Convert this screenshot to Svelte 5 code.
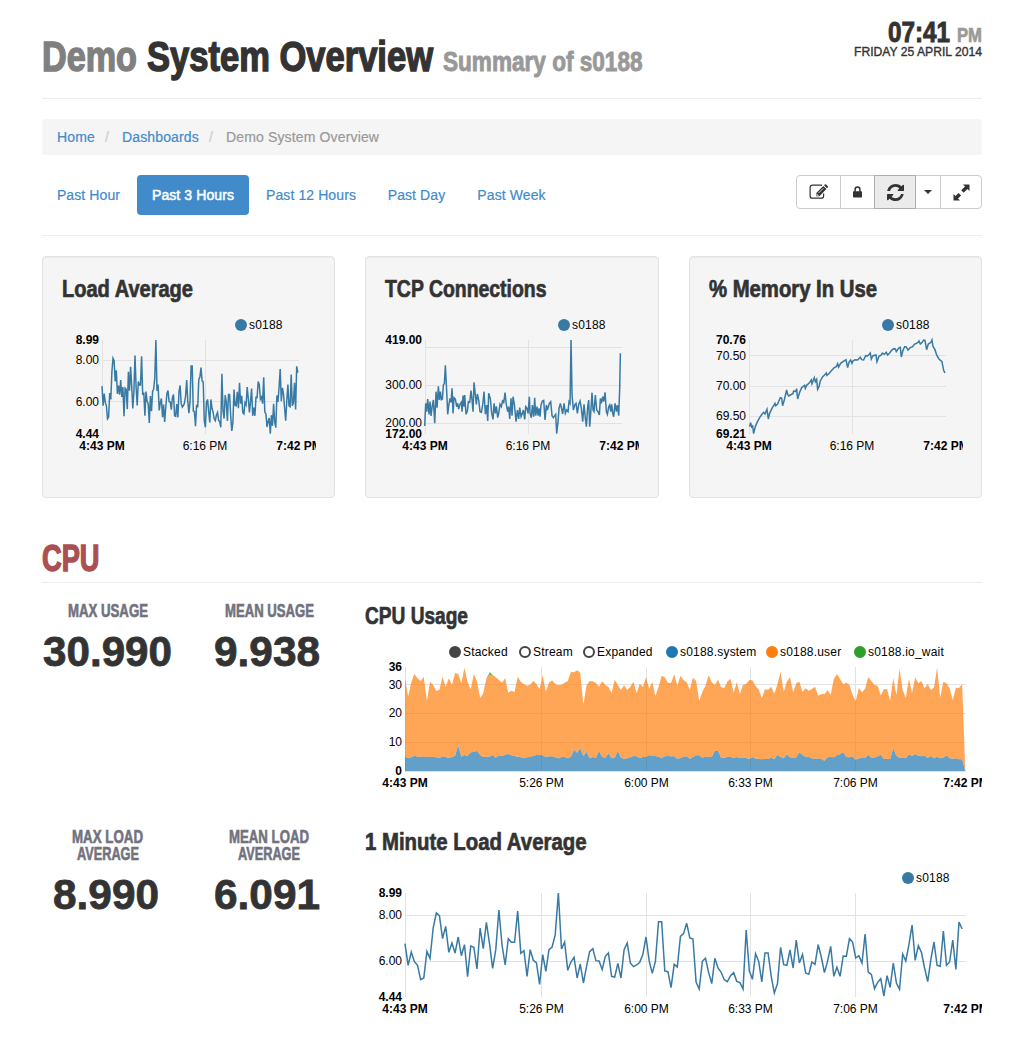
<script>
  const ranges = [
    { label: 'Past Hour', size: 'hour' },
    { label: 'Past 3 Hours', size: 'three', active: true },
    { label: 'Past 12 Hours', size: 'twelve' },
    { label: 'Past Day', size: 'day' },
    { label: 'Past Week', size: 'week' }
  ];

  // One-minute load samples, as depth below the peak (0 = 8.99, 310 = 4.44).
  const load = [
    152,217,177,206,217,260,255,175,196,105,60,68,137,100,178,150,180,132,188,155,251,159,163,228,105,167,88,152,226,170,
    51,156,216,137,148,148,54,181,173,250,170,202,210,274,185,235,170,162,125,0,168,147,232,207,193,255,213,270,220,176,
    167,203,204,230,190,180,250,252,211,255,170,150,210,221,216,208,184,132,203,241,205,86,86,234,236,284,214,222,130,122,
    91,135,138,267,288,205,196,238,272,196,225,238,260,266,248,239,265,269,288,111,233,259,182,205,267,180,180,250,300,272,
    163,215,217,171,225,141,210,184,240,244,207,214,155,192,239,205,160,250,223,250,189,190,137,147,195,188,210,123,237,244,
    287,268,257,309,248,283,210,270,289,183,204,155,96,202,158,178,225,266,200,147,217,220,114,217,207,141,229,87,108
  ];

  // Stacked CPU samples, in thirds of a pixel below the plot's top edge.
  const cpuTotal = [
    250,305,262,237,250,258,246,318,260,270,288,284,245,276,250,270,234,237,265,218,262,283,237,260,309,295,250,240,240,247,
    255,263,250,293,287,291,245,260,268,272,269,257,268,282,241,290,263,256,267,271,269,263,258,231,232,226,234,329,271,258,
    259,264,275,259,270,276,294,254,270,285,271,285,275,260,295,266,276,247,281,261,303,276,242,247,263,264,238,272,242,255,
    262,284,248,258,318,290,272,241,262,270,254,277,279,260,251,293,262,296,269,267,255,256,273,283,310,283,284,275,296,268,
    231,291,260,247,292,265,260,291,280,287,282,275,302,297,298,286,299,252,237,252,268,263,270,300,318,279,292,281,246,258,
    270,272,301,283,282,318,249,300,222,285,308,252,294,247,265,258,280,267,284,278,218,308,260,265,280,316,278,279,267,528
  ];
  const cpuSystem = [
    485,489,487,482,485,486,484,486,486,486,487,489,484,486,489,486,482,451,485,480,482,472,471,467,480,486,485,485,480,488,
    481,483,479,477,481,483,485,487,490,487,486,482,480,479,481,487,484,484,487,490,486,486,489,485,464,473,460,483,470,490,
    486,489,468,486,488,475,490,488,468,488,491,490,487,483,484,489,486,486,480,483,483,485,490,484,483,484,484,491,489,485,
    484,491,486,481,481,489,484,486,486,467,467,488,489,485,486,489,486,489,488,489,492,486,491,491,493,491,492,488,492,479,
    486,490,478,487,489,487,472,480,485,486,490,492,490,492,497,487,485,487,481,478,471,486,487,484,494,490,489,489,479,488,
    488,484,479,492,491,492,460,482,488,488,490,478,483,477,482,484,482,489,483,490,485,490,488,481,490,491,490,493,493,528
  ];

  const tcp = [
    [210,543],[213,475],[216,500],[219,462],[223,508],[226,470],[229,513],[233,480],[236,465],[240,535],[244,440],[247,488],[251,424],[254,465],[257,440],[260,464],[263,462],[266,420],[269,415],[272,361],
    [276,440],[279,508],[282,482],[286,460],[289,472],[292,430],[295,505],[298,458],[302,462],[306,485],[309,475],[312,492],[316,478],[320,472],[322,500],[325,452],[328,485],[330,450],[334,508],[338,498],
    [341,470],[345,472],[349,437],[352,465],[355,500],[358,412],[362,450],[365,478],[368,447],[372,465],[376,500],[380,502],[384,480],[388,440],[392,508],[396,480],[399,528],[402,445],[407,462],[411,505],
    [415,523],[418,475],[422,505],[425,484],[429,518],[432,505],[436,478],[440,485],[444,465],[447,475],[451,443],[455,480],[459,500],[462,485],[465,522],[469,460],[472,512],[475,455],[479,478],[484,530],
    [488,495],[492,522],[495,488],[499,515],[502,508],[506,495],[510,523],[513,485],[517,490],[520,505],[524,455],[526,505],[530,518],[533,480],[537,515],[540,458],[543,512],[547,485],[550,512],[553,490],
    [556,515],[559,480],[563,468],[567,466],[571,525],[575,480],[578,495],[581,485],[584,475],[588,470],[592,512],[596,518],[600,512],[603,508],[606,566],[610,530],[613,490],[617,475],[620,488],[624,507],
    [628,475],[632,505],[636,495],[640,500],[643,470],[646,475],[649,285],[652,450],[656,495],[660,480],[664,475],[668,505],[672,478],[676,468],[680,490],[684,530],[688,478],[692,520],[695,545],[699,485],
    [702,465],[705,545],[709,490],[712,443],[715,495],[718,500],[722,450],[726,495],[730,500],[734,510],[737,460],[740,475],[744,455],[747,470],[751,442],[755,500],[758,508],[762,485],[765,480],[768,500],
    [771,478],[774,505],[777,515],[781,475],[785,500],[788,480],[792,512],[795,430],[797,325]
  ];
  const memory = [
    [208,545],[211,533],[214,546],[217,543],[220,566],[225,545],[230,533],[238,518],[245,508],[250,502],[254,507],[260,493],[264,522],[268,505],[275,490],[284,475],[286,482],[292,477],[296,467],[300,458],
    [304,459],[307,482],[312,465],[319,435],[322,448],[325,453],[330,450],[338,446],[340,438],[346,440],[349,431],[352,462],[358,442],[364,428],[369,424],[373,421],[375,430],[379,421],[386,415],[393,405],
    [395,416],[402,398],[405,410],[409,403],[412,433],[416,425],[420,408],[427,395],[432,391],[438,384],[440,391],[447,385],[455,375],[462,368],[468,365],[472,356],[475,366],[481,355],[488,350],[497,344],
    [502,368],[506,352],[511,345],[515,355],[518,348],[524,344],[532,345],[540,337],[544,344],[550,345],[556,332],[562,333],[570,324],[573,342],[578,332],[587,330],[590,350],[596,334],[603,330],[606,324],
    [612,328],[618,322],[622,330],[628,324],[634,316],[640,311],[645,312],[648,320],[655,309],[660,307],[663,336],[668,316],[673,305],[677,305],[683,315],[690,308],[697,305],[702,298],[708,295],[713,292],
    [716,288],[720,297],[726,292],[730,285],[734,286],[739,314],[744,297],[752,292],[755,285],[758,304],[764,314],[769,330],[776,342],[785,350],[790,376],[794,384]
  ];

  const fmt = (x, y) => `${x.toFixed(2)},${y.toFixed(2)}`;
  const step = 3.13;
  const scaled = (pts, dx) => pts.map(([x, y]) => fmt(x / 3 - dx, y / 3 - 65)).join(' ');
  const stackY = (v) => (v - 216) / 3 + 33;
  const area = (top, bottom) =>
    [...top.map((v, i) => fmt(40 + i * step, stackY(v))),
     ...bottom.map((v, i) => fmt(40 + i * step, stackY(v))).reverse()].join(' ');

  const loadSmall = load.map((v, i) => fmt(40 + i * 1.1, 30 + (v * 94) / 310)).join(' ');
  const loadLarge = load.map((v, i) => fmt(40 + i * step, 33 + v / 3)).join(' ');
  const floor = cpuTotal.map(() => 528);
  const userArea = area(cpuTotal, cpuSystem);
  const systemArea = area(cpuSystem, floor);

  const cards = [
    {
      title: 'Load Average', width: 131, line: loadSmall,
      labels: [['8.99', 34, true], ['8.00', 54], ['6.00', 96], ['4.44', 128, true]],
      grid: [50.5, 91.5]
    },
    {
      title: 'TCP Connections', width: 161.5, line: scaled(tcp, 30.3),
      labels: [['419.00', 34, true], ['300.00', 79], ['200.00', 117], ['172.00', 128, true]],
      grid: [37.5, 75.5, 113.5]
    },
    {
      title: '% Memory In Use', width: 168, line: scaled(memory, 28.7),
      labels: [['70.76', 34, true], ['70.50', 50], ['70.00', 80], ['69.50', 110], ['69.21', 128, true]],
      grid: [45.5, 76.5, 106.5]
    }
  ];

  const ticks = [[176.5, '5:26 PM'], [281.5, '6:00 PM'], [385.5, '6:33 PM'], [490.5, '7:06 PM']];
  const legend = [
    [90, 'Stacked', 'dark'], [160, 'Stream', 'ring'], [224, 'Expanded', 'ring'],
    [307, 's0188.system', 'blue'], [407, 's0188.user', 'orange'], [495, 's0188.io_wait', 'green']
  ];

  const rows = [
    {
      title: 'CPU Usage', width: 103, stacked: true,
      stats: [
        { lines: [['MAX USAGE', 80]], value: '30.990', width: 129 },
        { lines: [['MEAN USAGE', 89]], value: '9.938', width: 106 }
      ],
      labels: [['36', 37, true], ['30', 55], ['20', 83], ['10', 112], ['0', 141, true]],
      grid: [50.5, 79.5, 108.5, 137.5]
    },
    {
      title: '1 Minute Load Average', width: 221.5,
      stats: [
        { lines: [['MAX LOAD', 71], ['AVERAGE', 62]], value: '8.990', width: 106 },
        { lines: [['MEAN LOAD', 80], ['AVERAGE', 62]], value: '6.091', width: 106 }
      ],
      labels: [['8.99', 37, true], ['8.00', 59], ['6.00', 105], ['4.44', 141, true]],
      grid: [55.5, 101.5]
    }
  ];
</script>

{#snippet fitted(text, width, height, baseline, tone)}
  <svg class="fitted {tone}" {width} {height}>
    <text x="0" y={baseline} textLength={width} lengthAdjust="spacingAndGlyphs">{text}</text>
  </svg>
{/snippet}

<main>
  <header>
    <h1>
      {@render fitted('Demo', 95, 60, 48, 'title muted')}
      {@render fitted('System Overview', 286, 60, 48, 'title')}
      {@render fitted('Summary of s0188', 199.5, 60, 48, 'subtitle')}
    </h1>
    <div class="clock">
      <div class="time">
        {@render fitted('07:41', 62, 25, 22, 'digits')}
        {@render fitted('PM', 25, 25, 22, 'meridiem')}
      </div>
      {@render fitted('FRIDAY 25 APRIL 2014', 128, 14, 11, 'date')}
    </div>
  </header>

  <nav class="crumbs">
    <a>Home</a><span class="slash">/</span><a class="second">Dashboards</a><span class="slash">/</span><span class="here">Demo System Overview</span>
  </nav>

  <div class="toolbar">
    <div class="pills">
      {#each ranges as r}
        <a class="pill {r.size}" class:active={r.active}>{r.label}</a>
      {/each}
    </div>
    <div class="buttons">
      <button class="edit" aria-label="Edit">
        <svg width="20" height="16" viewBox="0 0 20 16">
          <path d="M14.6 9.6V11.9a2.3 2.3 0 0 1-2.3 2.3H3.4A2.3 2.3 0 0 1 1.1 11.9V3.4A2.3 2.3 0 0 1 3.4 1.1H12l1 .3" fill="none" stroke="#333" stroke-width="1.2" />
          <path d="M7.3 12.2V9L14.3 2L17.4 5.1L10.4 12.2Z" fill="#333" />
          <path d="M15 1.3l.8-.8q.6-.5 1.2 0l1.8 1.8q.6.6 0 1.2l-.8.8Z" fill="#333" />
          <path d="M9.6 9L14.4 4.2M8.1 9.8v1.6h1.6" stroke="#fff" stroke-width=".8" fill="none" />
        </svg>
      </button>
      <button class="lock" aria-label="Lock">
        <svg width="9" height="12" viewBox="0 0 9 12">
          <path d="M2.1 6V3.4a2.4 2.4 0 0 1 4.8 0V6" fill="none" stroke="#333" stroke-width="1.5" />
          <rect y="5.2" width="9" height="6.2" rx=".7" fill="#333" />
        </svg>
      </button>
      <button class="refresh" aria-label="Refresh">
        <svg width="17" height="17" viewBox="0 0 1536 1536">
          <path fill="#333" d="M1511 928q0 5-1 7-64 268-268 434.5t-478 166.5q-146 0-282.5-55t-243.5-157l-129 129q-19 19-45 19t-45-19-19-45v-448q0-26 19-45t45-19h448q26 0 45 19t19 45-19 45l-137 137q71 66 161 102t187 36q134 0 250-65t186-179q11-17 53-117 8-23 30-23h192q13 0 22.5 9.5t9.5 22.5zm25-800v448q0 26-19 45t-45 19h-448q-26 0-45-19t-19-45 19-45l138-138q-148-137-349-137-134 0-250 65t-186 179q-11 17-53 117-8 23-30 23h-199q-13 0-22.5-9.5t-9.5-22.5v-7q65-268 270-434.5t480-166.5q146 0 284 55.5t245 156.5l130-129q19-19 45-19t45 19 19 45z" />
        </svg>
      </button>
      <button class="more" aria-label="More">
        <svg width="8" height="4" viewBox="0 0 8 4"><path d="M0 0H8L4 4Z" fill="#333" /></svg>
      </button>
      <button class="expand" aria-label="Full screen">
        <svg width="17" height="17" viewBox="0 0 17 17">
          <path fill="#333" d="M10 .5H16Q16.5.5 16.5 1V7L14.5 5L10.7 8.8L8.2 6.3L12 2.5ZM7 16.5H1Q.5 16.5.5 16V10L2.5 12L5.6 8.9L8.1 11.4L5 14.5Z" />
        </svg>
      </button>
    </div>
  </div>

  <section class="cards">
    {#each cards as c}
      <article class="card">
        <h3>{@render fitted(c.title, c.width, 34, 21, 'heading')}</h3>
        <svg class="chart" width="254" height="150">
          <circle class="steel" cx="179" cy="15" r="6" />
          <text class="name" x="187" y="19">s0188</text>
          <path class="grid" d="M40.5 30V124M143.5 30V124" />
          {#each c.grid as y}<path class="grid" d="M40 {y}H237" />{/each}
          <polyline class="line" points={c.line} />
          {#each c.labels as [t, y, strong]}
            <text class="end" class:strong x="37" {y}>{t}</text>
          {/each}
          <text class="mid strong" x="40" y="140">4:43 PM</text>
          <text class="mid" x="143" y="140">6:16 PM</text>
          <text class="mid strong" x="237" y="140">7:42 PM</text>
        </svg>
      </article>
    {/each}
  </section>

  <h2>{@render fitted('CPU', 57.5, 42, 31, 'section')}</h2>

  {#each rows as row}
    <section class="row">
      {#each row.stats as s}
        <div class="stat">
          {#each s.lines as [t, w]}{@render fitted(t, w, 17, 17, 'label')}{/each}
          <div class="value" class:short={s.value.length < 6}>{@render fitted(s.value, s.width, 50, 49, 'number')}</div>
        </div>
      {/each}
      <div class="panel">
        <h3>{@render fitted(row.title, row.width, 34, 24, 'heading')}</h3>
        <svg class="chart" width="617" height="165">
          <path class="grid" d="M40.5 33V137" />
          {#each ticks as [x]}<path class="grid" d="M{x} 33V137" />{/each}
          {#each row.grid as y}<path class="grid" d="M40 {y}H601" />{/each}
          {#if row.stacked}
            {#each legend as [x, t, tone]}
              <circle class={tone} cx={x} cy="18" r="5" />
              <text class="name" x={x + 8} y="22">{t}</text>
            {/each}
            <polygon class="system" points={systemArea} />
            <polygon class="user" points={userArea} />
            <path class="wait" d="M121.5 44.4L124.8 38L127.8 41L124.5 41Z" />
          {:else}
            <circle class="steel" cx="543" cy="18" r="6" />
            <text class="name" x="551" y="22">s0188</text>
            <polyline class="line" points={loadLarge} />
          {/if}
          {#each row.labels as [t, y, strong]}
            <text class="end" class:strong x="37" {y}>{t}</text>
          {/each}
          <text class="mid strong" x="40" y="153">4:43 PM</text>
          {#each ticks as [x, t]}<text class="mid" {x} y="153">{t}</text>{/each}
          <text class="mid strong" x="601" y="153">7:42 PM</text>
        </svg>
      </div>
    </section>
  {/each}
</main>

<style>
  :global(body) {
    background: #fff;
    overflow: hidden;
  }
  main {
    width: 940px;
    height: 1053px;
    margin: 0 42px;
    font: 14px/20px 'Liberation Sans', Arial, sans-serif;
    color: #333;
  }
  svg {
    display: block;
    flex: none;
  }
  h1, h2, h3 {
    margin: 0;
    font-size: inherit;
  }
  header {
    display: flex;
    justify-content: space-between;
    height: 98px;
    border-bottom: 1px solid #eee;
  }
  h1 {
    display: flex;
    gap: 10px;
    padding-top: 23px;
  }
  .fitted {
    overflow: visible;
    fill: #333;
    stroke: #333;
    stroke-width: .7px;
    font-family: 'Liberation Sans Narrow', 'Liberation Sans', Arial, sans-serif;
    font-weight: bold;
  }
  .title {
    font-size: 42.5px;
    stroke-width: 1.5px;
  }
  .muted {
    fill: #808080;
    stroke: #808080;
  }
  .subtitle {
    font-size: 27px;
    fill: #999;
    stroke: #999;
    stroke-width: .9px;
  }
  .heading { font-size: 24px; }
  .section {
    font-size: 36px;
    fill: #aa5054;
    stroke: #aa5054;
    stroke-width: 1.4px;
  }
  .digits {
    font-size: 30px;
    stroke-width: 1px;
  }
  .meridiem {
    font-size: 20px;
    fill: #999;
    stroke: #999;
  }
  .date {
    font-family: 'Liberation Sans', Arial, sans-serif;
    font-size: 12px;
    font-weight: normal;
    stroke-width: .35px;
  }
  .label {
    font-size: 17.5px;
    fill: #71727e;
    stroke: #71727e;
    stroke-width: .6px;
  }
  .number {
    font-family: 'Liberation Sans', Arial, sans-serif;
    font-size: 43px;
    stroke-width: .8px;
  }
  .short { margin-right: 4px; }
  .clock {
    display: flex;
    flex-direction: column;
    align-items: flex-end;
    padding-top: 20px;
  }
  .time {
    display: flex;
    gap: 7px;
  }
  .crumbs {
    display: flex;
    align-items: center;
    height: 36px;
    margin-top: 20px;
    padding-left: 15px;
    border-radius: 4px;
    background: #f5f5f5;
    letter-spacing: .15px;
    -webkit-text-stroke: .2px;
  }
  a { color: #428bca; }
  .slash {
    width: 27px;
    box-sizing: border-box;
    padding-left: 10px;
    color: #ccc;
  }
  .here { color: #999; }
  .toolbar {
    display: flex;
    justify-content: space-between;
    align-items: flex-start;
    height: 60px;
    margin-top: 20px;
    border-bottom: 1px solid #eee;
  }
  .pills {
    display: flex;
    gap: 2px;
    letter-spacing: .1px;
    -webkit-text-stroke: .2px;
  }
  .pill {
    height: 40px;
    line-height: 40px;
    border-radius: 4px;
    text-align: center;
    white-space: nowrap;
  }
  .active {
    background: #428bca;
    color: #fff;
    -webkit-text-stroke: .5px #fff;
  }
  .hour { width: 93px; }
  .three { width: 112px; }
  .twelve { width: 120px; }
  .day { width: 87px; }
  .week { width: 99px; }
  .buttons { display: flex; }
  button {
    display: flex;
    align-items: center;
    justify-content: center;
    box-sizing: border-box;
    height: 34px;
    margin: 0 0 0 -1px;
    padding: 0;
    border: 1px solid #ccc;
    background: #fff;
  }
  .edit {
    width: 45px;
    border-radius: 4px 0 0 4px;
  }
  .lock { width: 35px; }
  .refresh {
    position: relative;
    width: 42px;
    border-color: #adadad;
    background: #ebebeb;
  }
  .more { width: 26px; }
  .expand {
    width: 42px;
    border-radius: 0 4px 4px 0;
  }
  .cards {
    display: grid;
    grid-template-columns: repeat(3, minmax(0, 1fr));
    gap: 30px;
    margin-top: 20px;
  }
  .card {
    box-sizing: border-box;
    height: 242px;
    padding: 19px;
    border: 1px solid #e3e3e3;
    border-radius: 4px;
    background: #f5f5f5;
    box-shadow: inset 0 1px 1px rgba(0, 0, 0, .05);
  }
  h2 {
    height: 42px;
    margin-top: 42px;
    border-bottom: 1px solid #eee;
  }
  .row {
    display: grid;
    grid-template-columns: 131.67px 131.67px 1fr;
    gap: 30px;
    height: 209px;
    padding-top: 17px;
  }
  .stat {
    display: flex;
    flex-direction: column;
    align-items: center;
  }
  .chart {
    overflow: hidden;
    font: 12px 'Liberation Sans', Arial, sans-serif;
    fill: #000;
  }
  .name { letter-spacing: .2px; }
  .strong { font-weight: bold; }
  .end { text-anchor: end; }
  .mid { text-anchor: middle; }
  .grid {
    fill: none;
    stroke: #e2e2e2;
    shape-rendering: crispEdges;
  }
  .line {
    fill: none;
    stroke: #387aa3;
    stroke-width: 1.5;
  }
  .steel { fill: #387aa3; }
  .dark, .ring {
    fill: #444;
    stroke: #444;
    stroke-width: 2;
  }
  .ring { fill: #fff; }
  .blue { fill: #1f77b4; stroke: #1f77b4; stroke-width: 2; }
  .orange { fill: #ff7f0e; stroke: #ff7f0e; stroke-width: 2; }
  .green { fill: #2ca02c; stroke: #2ca02c; stroke-width: 2; }
  .system { fill: #1f77b4; fill-opacity: .7; }
  .user { fill: #ff7f0e; fill-opacity: .7; }
  .wait { fill: #2ca02c; fill-opacity: .7; }
</style>
